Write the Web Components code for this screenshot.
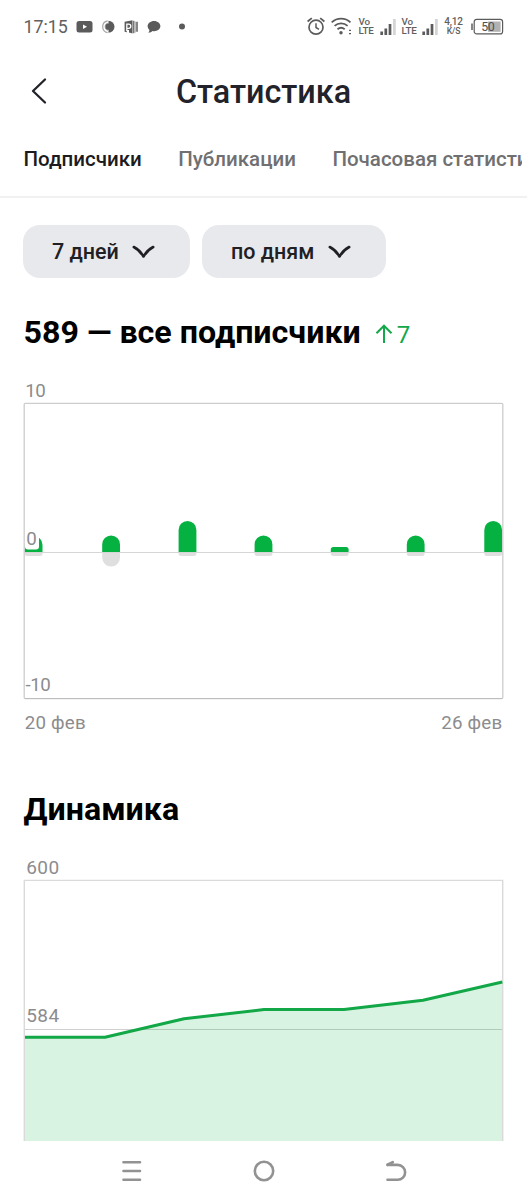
<!DOCTYPE html>
<html lang="ru">
<head>
<meta charset="utf-8">
<title>Статистика</title>
<style>
  body {
    margin: 0;
    width: 527px;
    height: 1200px;
    overflow: hidden;
    background: #fff;
    font-family: Roboto, "Noto Sans", sans-serif;
  }
</style>
</head>
<body>
<stats-app></stats-app>

<script>
class StatusBar extends HTMLElement {
  constructor() {
    super();
    this.shadowDOM = this.attachShadow({ mode: "open" });
  }

  connectedCallback() {
    this.render();
  }

  render() {
    const bars = `
      <svg width="17" height="18" viewBox="0 0 17 18">
        <path d="M1.7 13.5v3.5M5.800 10.500v6.500M10 6v11" stroke="#5b5b5b" stroke-width="2.700"/>
        <path d="M14.400 1v16" stroke="#d4d4d4" stroke-width="2.700"/>
      </svg>`;
    this.shadowDOM.innerHTML = `
        <style>
            :host {
                display: flex;
                align-items: center;
                justify-content: space-between;
                height: 53px;
                box-sizing: border-box;
                padding: 0 23.5px 0 23.5px;
                color: #606060;
            }
            div {
                display: flex;
                align-items: center;
            }
            svg {
                display: block;
                flex: none;
            }
            .time {
                width: 52.5px;
                margin-right: -8px;
                font-size: 17.8px;
                line-height: 20px;
                padding-top: 1px;
            }
            .left {
                gap: 8px;
            }
            .stack {
                display: block;
                flex: none;
                font-weight: 500;
                font-size: 9.8px;
                line-height: 8.6px;
                letter-spacing: -0.2px;
                white-space: nowrap;
            }
            .speed {
                text-align: center;
                font-size: 10px;
            }
            .speed small {
                font-size: 8.6px;
                display: block;
            }
        </style>
        <div class="left">
            <span class="time">17:15</span>
            <svg width="17" height="18" viewBox="0 0 17 18">
                <rect x=".5" y="3" width="16" height="11.500" rx="2.500" fill="#5b5b5b"/>
                <path d="M7 6.500v4.400l4-2.200z" fill="#fff"/>
            </svg>
            <svg width="14" height="18" viewBox="0 0 14 18">
                <path d="M6.600 2.800a6 6 0 0 0 0 11.800" fill="none" stroke="#a5a5a5" stroke-width="1.200"/>
                <path d="M7 5a3.800 3.800 0 0 0 0 7.400" fill="none" stroke="#aaa" stroke-width="1"/>
                <path d="M7.500 2.700a6 6 0 0 1 0 12z" fill="#5b5b5b"/>
                <circle cx="7.500" cy="8.700" r="3.100" fill="#5b5b5b"/>
            </svg>
            <svg width="15" height="18" viewBox="0 0 15 18" style="margin-left:1px">
                <path d="M.6 3.800 8.500 2.200v13.300L5 14.600V12H3v2.200L.6 13.700z" fill="#5b5b5b"/>
                <path d="M2.800 13.300V6.200h1.900a2 2 0 0 1 0 4.200H2.800" fill="none" stroke="#fff" stroke-width="1.300"/>
                <path d="M9.700 2.800v12.400" stroke="#777" stroke-width="1.500"/>
                <path d="M11.200 3.500v11" stroke="#aaa" stroke-width="1.200"/>
                <path d="M13 3.800v10" stroke="#666" stroke-width="1.600"/>
            </svg>
            <svg width="14" height="18" viewBox="0 0 14 18">
                <path d="M7.100 2.900c3.500 0 6.300 2.300 6.300 5.200s-2.800 5.200-6.300 5.200c-.6 0-1.200 0-1.700-.2-1 1.100-2.400 1.800-4.200 1.700.8-.8 1.200-1.600 1.200-2.800C1.300 11 .6 9.600.6 8.100c0-2.900 2.900-5.200 6.500-5.200z" fill="#5b5b5b"/>
            </svg>
            <svg width="8" height="18" viewBox="0 0 8 18" style="margin-left:9px">
                <circle cx="4" cy="8.500" r="3" fill="#5b5b5b"/>
            </svg>
        </div>
        <div class="right">
            <svg width="18" height="20" viewBox="0 0 18 20" fill="none" stroke="#5b5b5b" stroke-width="1.700">
                <circle cx="9" cy="10.200" r="7"/>
                <path d="M9 6.300v4.200l3 1.800" stroke-width="1.500"/>
                <path d="M.6 4.500 4.800 1.100M17.400 4.500 13.200 1.100" stroke-width="1.800"/>
            </svg>
            <svg width="21" height="20" viewBox="0 0 21 20" fill="none" stroke="#5b5b5b" stroke-width="1.800" style="margin-left:6px">
                <path d="M.7 5.300a14 14 0 0 1 18.800 0M3.600 8.900a9.500 9.500 0 0 1 13 0M6.500 12.300a5.600 5.600 0 0 1 7.200 0"/>
                <circle cx="10" cy="15.700" r="1.700" fill="#5b5b5b" stroke="none"/>
                <path d="M18 13.400h2M18 16.600h2" stroke-width="1.300"/>
            </svg>
            <span class="stack" style="width:15px;margin-left:7px">Vo<br>LTE</span>
            <span style="margin-left:6px">${bars}</span>
            <span class="stack" style="width:15px;margin-left:5px">Vo<br>LTE</span>
            <span style="margin-left:5px">${bars}</span>
            <span class="stack speed" style="width:20px;margin-left:5px">4,12<small>K/S</small></span>
            <svg width="33" height="18" viewBox="0 0 33 18" style="margin-left:7px">
                <path d="M1 5.500v6.500" stroke="#5b5b5b" stroke-width="1.500"/>
                <rect x="3.200" y="1.300" width="28.400" height="14.600" rx="2.500" fill="none" stroke="#5b5b5b" stroke-width="1.200"/>
                <rect x="17" y="3.500" width="12.600" height="10.300" fill="#b2b2b2"/>
                <text x="10.300" y="13.100" font-size="12.400" textLength="13.500" fill="#505050">50</text>
            </svg>
        </div>
            `;
  }
}

class AppHeader extends HTMLElement {
  constructor() {
    super();
    this.shadowDOM = this.attachShadow({ mode: "open" });
  }

  connectedCallback() {
    this.render();
  }

  render() {
    this.shadowDOM.innerHTML = `
        <style>
            :host {
                display: grid;
                grid-template-columns: 54px 1fr 54px;
                align-items: center;
                height: 77px;
                color: #22222a;
            }
            h1 {
                margin: 0;
                font-size: 32.3px;
                font-weight: 500;
                line-height: 40px;
                text-align: center;
                white-space: nowrap;
            }
            svg {
                display: block;
                margin: 0 0 1px 30px;
            }
        </style>
        <svg width="18" height="28" viewBox="0 0 18 28" fill="none" stroke="#22222a" stroke-width="2.300" stroke-linecap="round" stroke-linejoin="round">
            <path d="M15 2.500 3 14 15 25.500"/>
        </svg>
        <h1><slot></slot></h1>
            `;
  }
}

class TabList extends HTMLElement {
  constructor() {
    super();
    this.shadowDOM = this.attachShadow({ mode: "open" });
  }

  connectedCallback() {
    this.render();
  }

  render() {
    this.shadowDOM.innerHTML = `
        <style>
            :host {
                display: block;
                height: 66px;
                border-bottom: 2px solid #f1f1f2;
            }
            nav {
                display: flex;
                gap: 36.5px;
                margin: 0 5px 0 23.5px;
                padding-top: 16px;
                overflow: hidden;
                white-space: nowrap;
                font-size: 20.5px;
                font-weight: 500;
                line-height: 26px;
            }
            ::slotted(span) {
                color: #707072;
            }
            ::slotted(span.active) {
                color: #1c1c20;
            }
        </style>
        <nav><slot></slot></nav>
            `;
  }
}

class SelectPill extends HTMLElement {
  constructor() {
    super();
    this.shadowDOM = this.attachShadow({ mode: "open" });
  }

  connectedCallback() {
    this.render();
  }

  render() {
    this.shadowDOM.innerHTML = `
        <style>
            :host {
                display: flex;
                align-items: center;
                justify-content: space-between;
                box-sizing: border-box;
                height: 53px;
                padding: 0 35px 0 29px;
                border-radius: 17px;
                background: #e8e9ed;
                color: #202024;
                font-size: 21.5px;
                font-weight: 500;
                white-space: nowrap;
            }
        </style>
        <span><slot></slot></span>
        <svg width="23" height="14" viewBox="0 0 23 14" fill="none" stroke="#202024" stroke-width="2.600" stroke-linecap="round" stroke-linejoin="round">
            <path d="M1.800 2Q7.500 4.800 11.500 11.500 15.500 4.800 21.200 2"/>
        </svg>
            `;
  }
}

class SectionTitle extends HTMLElement {
  constructor() {
    super();
    this.shadowDOM = this.attachShadow({ mode: "open" });
  }

  connectedCallback() {
    this.render();
  }

  render() {
    const delta = this.getAttribute("delta");
    this.shadowDOM.innerHTML = `
        <style>
            :host {
                display: flex;
                align-items: baseline;
                height: 40px;
                padding-left: 23.5px;
                white-space: nowrap;
            }
            h2 {
                margin: 0;
                font-size: 32.2px;
                font-weight: 700;
                line-height: 40px;
                color: #000;
            }
            .delta {
                display: flex;
                align-items: baseline;
                gap: 4px;
                margin-left: 14px;
                font-size: 24px;
                color: #13a84a;
            }
        </style>
        <h2><slot></slot></h2>
        ${delta ? `<span class="delta">
            <svg width="18" height="19" viewBox="0 0 18 19" fill="none" stroke="#13a84a" stroke-width="2">
                <path d="M9 19V2M1.500 9.200 9 1.700l7.500 7.500"/>
            </svg>${delta}</span>` : ""}
            `;
  }
}

// subscribed / unsubscribed per day
class BarChart extends HTMLElement {
  constructor() {
    super();
    this.shadowDOM = this.attachShadow({ mode: "open" });
  }

  connectedCallback() {
    this.render();
  }

  render() {
    const zero = 552;
    const days = [
      { x: 24.7, up: 16, down: 4 },
      { x: 102.2, up: 16.5, down: 14.5 },
      { x: 178.6, up: 31, down: 4 },
      { x: 254.6, up: 16.5, down: 4 },
      { x: 330.8, up: 5, down: 4 },
      { x: 406.8, up: 16.5, down: 4 },
      { x: 484.3, up: 31, down: 4 },
    ];
    const w = 17.8;
    const bar = (d) => {
      const ru = d.up > 9 ? w / 2 : 2.5;
      const rd = d.down > 9 ? w / 2 : 2.5;
      return `
        <path fill="#05b141" d="M${d.x} ${zero}v${-(d.up - ru)}a${ru} ${ru} 0 0 1 ${ru} ${-ru}h${w - 2 * ru}a${ru} ${ru} 0 0 1 ${ru} ${ru}v${d.up - ru}z"/>
        <path fill="#dfdfdf" d="M${d.x} ${zero}v${d.down - rd}a${rd} ${rd} 0 0 0 ${rd} ${rd}h${w - 2 * rd}a${rd} ${rd} 0 0 0 ${rd} ${-rd}v${-(d.down - rd)}z"/>`;
    };
    this.shadowDOM.innerHTML = `
        <style>
            :host {
                display: block;
                height: 360px;
            }
            svg {
                display: block;
            }
            text {
                font-size: 18.7px;
                fill: #8c8c8e;
            }
        </style>
        <svg width="527" height="360" viewBox="0 380 527 360">
            ${days.map(bar).join("")}
            <rect x="25" y="529" width="14" height="20.500" rx="3" fill="#fff"/>
            <path d="M25 552.500h477" stroke="#d6d6d6"/>
            <rect x="24.200" y="403.300" width="478.600" height="295.300" rx="1" fill="none" stroke="#cdcdcd" stroke-width="1.300"/>
            <path d="M25 698.500h477" stroke="#bdbdbd"/>
            <text x="25.200" y="396.700" textLength="20.500">10</text>
            <text x="26.300" y="544.500">0</text>
            <text x="25.500" y="690.700" textLength="25.300">-10</text>
            <text x="24.700" y="728.700" textLength="61">20 фев</text>
            <text x="441.200" y="728.700" textLength="61">26 фев</text>
        </svg>
            `;
  }
}

// total subscribers
class AreaChart extends HTMLElement {
  constructor() {
    super();
    this.shadowDOM = this.attachShadow({ mode: "open" });
  }

  connectedCallback() {
    this.render();
  }

  render() {
    const line = "25,1037.3 105,1037.3 184,1018.8 264,1009.5 344,1009.5 423,1000.3 502.3,982";
    this.shadowDOM.innerHTML = `
        <style>
            :host {
                display: block;
                height: 285px;
            }
            svg {
                display: block;
            }
            text {
                font-size: 19px;
                fill: #8c8c8e;
            }
        </style>
        <svg width="527" height="285" viewBox="0 856 527 285">
            <path d="M25 1029.500h477" stroke="#d0d0d0"/>
            <polygon points="25,1141 ${line} 502.300,1141" fill="#05b141" fill-opacity=".155"/>
            <path d="M24.300 1141V880.400H502.700V1141" fill="none" stroke="#dadada" stroke-width="1.400"/>
            <polyline points="${line}" fill="none" stroke="#12a747" stroke-width="3" stroke-linejoin="round"/>
            <text x="26.200" y="873.700" textLength="33">600</text>
            <text x="26.200" y="1021.700" textLength="33">584</text>
        </svg>
            `;
  }
}

class NavButtons extends HTMLElement {
  constructor() {
    super();
    this.shadowDOM = this.attachShadow({ mode: "open" });
  }

  connectedCallback() {
    this.render();
  }

  render() {
    this.shadowDOM.innerHTML = `
        <style>
            :host {
                display: flex;
                justify-content: center;
                align-items: center;
                gap: 108px;
                height: 59px;
                background: #fff;
            }
            svg {
                display: block;
                fill: none;
                stroke: #929292;
                stroke-width: 2.6;
                stroke-linecap: round;
                stroke-linejoin: round;
            }
        </style>
        <svg width="24" height="24" viewBox="0 0 24 24"><path d="M3.500 3.200h16.500M3.500 12h16.500M3.500 20.800h16.500"/></svg>
        <svg width="24" height="24" viewBox="0 0 24 24"><circle cx="12" cy="12" r="9.200"/></svg>
        <svg width="24" height="24" viewBox="0 0 24 24">
            <path d="M3.500 20.800h10.200a7.400 7.400 0 0 0 0-14.900H3.700"/>
            <path d="M3.500 5.700 8.700 3.200" stroke-width="2.800"/>
        </svg>
            `;
  }
}

class StatsApp extends HTMLElement {
  constructor() {
    super();
    this.shadowDOM = this.attachShadow({ mode: "open" });
  }

  connectedCallback() {
    this.render();
  }

  render() {
    this.shadowDOM.innerHTML = `
        <style>
            :host {
                display: flex;
                flex-direction: column;
                height: 1200px;
            }
            .filters {
                display: flex;
                gap: 12px;
                padding: 27px 0 0 23px;
                margin-bottom: 34px;
            }
            .filters select-pill:first-child { width: 167px; }
            .filters select-pill:last-child { width: 184px; }
            bar-chart { margin: 28px 0 49px; }
            area-chart { margin-top: 27px; }
        </style>
        <status-bar></status-bar>
        <app-header>Статистика</app-header>
        <tab-list>
            <span class="active">Подписчики</span>
            <span>Публикации</span>
            <span>Почасовая статистика</span>
        </tab-list>
        <div class="filters">
            <select-pill>7 дней</select-pill>
            <select-pill>по дням</select-pill>
        </div>
        <section-title delta="7">589 — все подписчики</section-title>
        <bar-chart></bar-chart>
        <section-title>Динамика</section-title>
        <area-chart></area-chart>
        <nav-buttons></nav-buttons>
            `;
  }
}

customElements.define("status-bar", StatusBar);
customElements.define("app-header", AppHeader);
customElements.define("tab-list", TabList);
customElements.define("select-pill", SelectPill);
customElements.define("section-title", SectionTitle);
customElements.define("bar-chart", BarChart);
customElements.define("area-chart", AreaChart);
customElements.define("nav-buttons", NavButtons);
customElements.define("stats-app", StatsApp);
</script>
</body>
</html>
